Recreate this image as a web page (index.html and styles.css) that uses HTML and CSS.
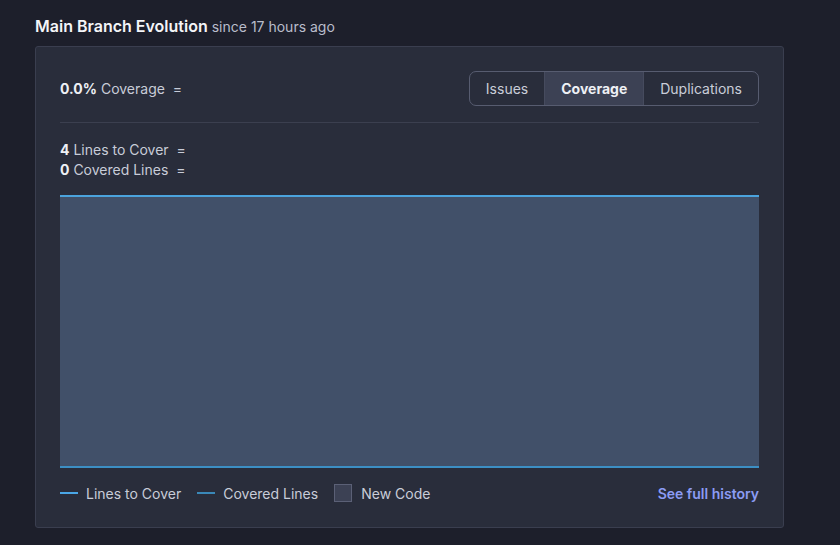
FILE: index.html
```html
<!DOCTYPE html>
<html>
<head>
<meta charset="utf-8">
<link rel="stylesheet" href="styles.css">
</head>
<body>
<div class="page">
  <h2 class="title"><span class="title-main">Main Branch Evolution</span> <span class="title-sub">since 17 hours ago</span></h2>
  <div class="card">
    <div class="head">
      <div class="metric"><strong>0.0%</strong> Coverage <span class="eq">=</span></div>
      <div class="toggle">
        <button class="tbtn">Issues</button>
        <button class="tbtn active">Coverage</button>
        <button class="tbtn">Duplications</button>
      </div>
    </div>
    <div class="divider"></div>
    <div class="stats">
      <div class="stat"><strong>4</strong> Lines to Cover <span class="eq">=</span></div>
      <div class="stat"><strong>0</strong> Covered Lines <span class="eq">=</span></div>
    </div>
    <div class="chart"></div>
    <div class="legend">
      <div class="litem"><span class="lline l1"></span>Lines to Cover</div>
      <div class="litem"><span class="lline l2"></span>Covered Lines</div>
      <div class="litem"><span class="lbox"></span>New Code</div>
      <a class="history" href="#">See full history</a>
    </div>
  </div>
</div>
</body>
</html>
```
FILE: styles.css
```css
html, body {
  margin: 0;
  padding: 0;
  background: #1d1f2b;
}
body {
  font-family: Inter, "Noto Sans", sans-serif;
  color: #e1e4ec;
  font-size: 14px;
}
.page {
  padding: 16px 56px 0 35px;
}
.title {
  margin: 0;
  line-height: 20px;
  font-size: 16px;
  font-weight: 600;
  color: #f4f5f8;
}
.title-sub {
  font-size: 14px;
  font-weight: 400;
  color: #b9bdcb;
}
.card {
  margin-top: 9px;
  width: 699px;
  background: #292d3b;
  border: 1px solid #3a3e4f;
  border-radius: 3px;
  padding: 24px;
}
.head {
  display: flex;
  justify-content: space-between;
  align-items: center;
  height: 35px;
}
.metric, .stat {
  color: #c8ccd8;
  line-height: 20px;
}
.metric strong, .stat strong {
  color: #eef0f5;
  font-weight: 700;
}
.eq {
  margin-left: 4px;
}
.toggle {
  display: flex;
  border: 1px solid #575c70;
  border-radius: 7px;
  overflow: hidden;
  height: 35px;
  box-sizing: border-box;
}
.tbtn {
  font-family: inherit;
  font-size: 14px;
  background: transparent;
  color: #c9cdd9;
  border: 0;
  padding: 0 16px;
  margin: 0;
  cursor: pointer;
}
.tbtn + .tbtn {
  border-left: 1px solid #464b5e;
}
.tbtn.active {
  background: #3c4154;
  color: #eef0f5;
  font-weight: 700;
}
.divider {
  height: 1px;
  background: #3b3f4f;
  margin-top: 16px;
}
.stats {
  margin-top: 17px;
}
.chart {
  margin-top: 15px;
  height: 269px;
  background: #415069;
  border-top: 2px solid #4ba3dd;
  border-bottom: 2px solid #3c8fc4;
}
.legend {
  display: flex;
  align-items: center;
  margin-top: 15px;
  height: 20px;
  color: #c8ccd8;
}
.litem {
  display: flex;
  align-items: center;
  margin-right: 16px;
}
.lline {
  display: inline-block;
  width: 18px;
  height: 2px;
  margin-right: 8px;
}
.l1 { background: #4aa6e6; }
.l2 { background: #3a88b8; }
.lbox {
  display: inline-block;
  width: 16px;
  height: 16px;
  border: 1px solid #5b6076;
  background: #3c4154;
  margin-right: 9px;
}
.history {
  margin-left: auto;
  color: #8c9cf4;
  font-weight: 600;
  text-decoration: none;
}
```
